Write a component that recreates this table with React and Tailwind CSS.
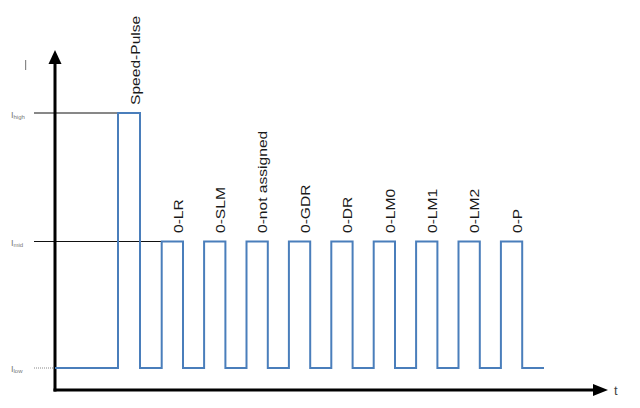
import React from "react";

const BLUE = "#4a7ebb";
const LOW = 368;
const MID = 241.5;
const HIGH = 113;

const labels = ["0-LR", "0-SLM", "0-not assigned", "0-GDR", "0-DR", "0-LM0", "0-LM1", "0-LM2", "0-P"];
const first = 161.7;
const period = 42.4;
const width = 21.3;

const pulses = labels.map((name, i) => {
  const rise = first + period * i;
  return { name, rise, fall: rise + width };
});

const wavePath = () => {
  let d = `M55 ${LOW} H118 V${HIGH} H140 V${LOW}`;
  pulses.forEach((p) => {
    d += ` H${p.rise.toFixed(1)} V${MID} H${p.fall.toFixed(1)} V${LOW}`;
  });
  d += " H544";
  return d;
};

const Label = ({ x, y, children }) => (
  <text
    transform={`translate(${x} ${y}) rotate(-90) scale(1.2 1)`}
    fontSize="13"
    fill="#1a1a1a"
  >
    {children}
  </text>
);

const LevelLabel = ({ y, sub }) => (
  <text x="11" y={y} fill="#777" fontSize="9">
    I<tspan fontSize="6" dy="1">{sub}</tspan>
  </text>
);

export default function App() {
  return (
    <div className="w-[640px] h-[408px] bg-white" style={{ fontFamily: '"Liberation Sans", Arial, sans-serif' }}>
      <svg width="640" height="408" viewBox="0 0 640 408" className="block">
        {/* reference levels */}
        <line x1="34" y1={HIGH} x2="118" y2={HIGH} stroke="#111" strokeWidth="1" />
        <line x1="34" y1={MID} x2="162" y2={MID} stroke="#111" strokeWidth="1" />
        <line x1="34" y1={LOW} x2="55" y2={LOW} stroke="#888" strokeWidth="1" strokeDasharray="1 1" />

        <LevelLabel y="118" sub="high" />
        <LevelLabel y="246" sub="mid" />
        <LevelLabel y="372" sub="low" />

        {/* axes */}
        <line x1="55" y1="62" x2="55" y2="391.5" stroke="#000" strokeWidth="3" />
        <polygon points="55,50 48.5,64 61.5,64" fill="#000" />
        <line x1="53.5" y1="390" x2="596" y2="390" stroke="#000" strokeWidth="3" />
        <polygon points="608,390 593,384 593,396" fill="#000" />

        <rect x="25" y="60" width="1.2" height="10" fill="#888" />
        <text x="614" y="395" fontSize="13" fill="#444">t</text>

        {/* signal */}
        <path d={wavePath()} fill="none" stroke={BLUE} strokeWidth="2" />

        <Label x={139.5} y={105}>Speed-Pulse</Label>
        {pulses.map((p) => (
          <Label key={p.name} x={p.fall - 0.5} y={233}>
            {p.name}
          </Label>
        ))}
      </svg>
    </div>
  );
}
